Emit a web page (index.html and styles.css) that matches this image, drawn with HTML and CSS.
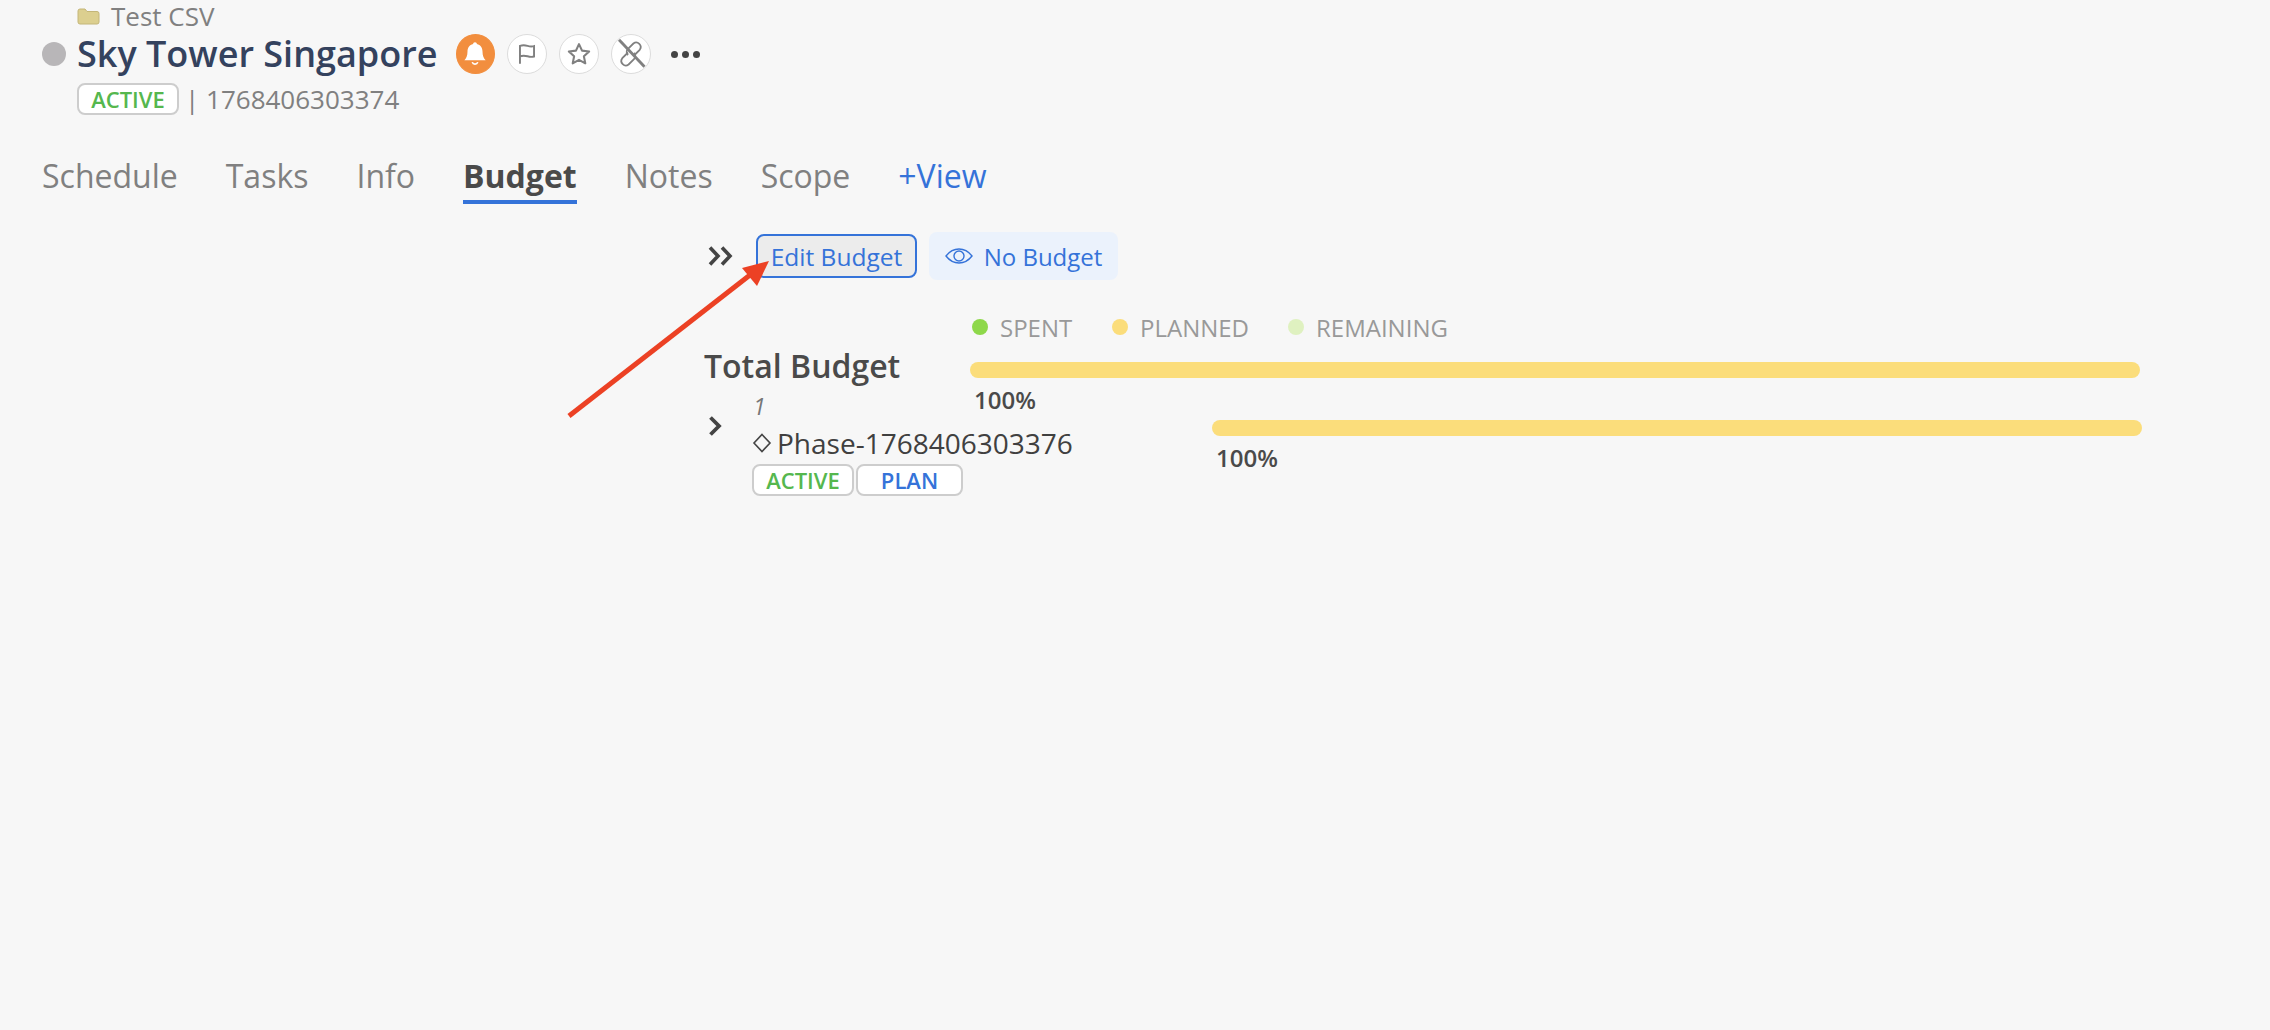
FILE: index.html
```html
<!DOCTYPE html>
<html lang="en">
<head>
<meta charset="utf-8">
<title>Sky Tower Singapore</title>
<link rel="stylesheet" href="styles.css">
</head>
<body>
<div class="page">
  <header class="head">
    <div class="crumb">
      <svg class="folder" viewBox="0 0 23 17"><path d="M1 3a2 2 0 0 1 2-2h5l2 2.500h10a2 2 0 0 1 2 2V14a2 2 0 0 1-2 2H3a2 2 0 0 1-2-2z" fill="#dccf8f" stroke="#c4b678" stroke-width="1"/></svg>
      <span class="crumb-text">Test CSV</span>
    </div>
    <div class="title-row">
      <span class="status-dot"></span>
      <h1 class="title">Sky Tower Singapore</h1>
      <div class="actions">
        <span class="circle circle-on">
          <svg viewBox="0 0 24 24" width="30" height="30"><path d="M12 2.500c.9 0 1.500.6 1.500 1.400 3 .7 4.500 3.100 4.500 6.100 0 3.500 1 5.500 2.500 7H3.500C5 15.500 6 13.500 6 10c0-3 1.500-5.400 4.500-6.100 0-.8.6-1.400 1.500-1.400z" fill="#fff"/><path d="M9.800 18.500a2.300 2.300 0 0 0 4.400 0" fill="none" stroke="#fff" stroke-width="1.300"/></svg>
        </span>
        <span class="circle">
          <svg viewBox="0 0 24 24" width="26" height="26" fill="none" stroke="#808080" stroke-width="1.800"><path d="M5.500 21V4.500c3-1 5-.6 7 0s4 .8 6 .2v9.600c-2 .6-4 .4-6-.2s-4-1-7 0"/></svg>
        </span>
        <span class="circle">
          <svg viewBox="0 0 24 24" width="28" height="28" fill="none" stroke="#808080" stroke-width="1.800" stroke-linejoin="round"><path d="M12 3.500l2.600 5.600 6.100.7-4.500 4.200 1.200 6-5.400-3-5.400 3 1.200-6-4.500-4.200 6.100-.7z"/></svg>
        </span>
        <span class="circle">
          <svg viewBox="0 0 24 24" width="36" height="36" fill="none" stroke="#808080"><path d="M10 11l-3.800 3.800a3 3 0 0 0 4.200 4.200l3.600-3.600a3 3 0 0 0 0-4.200" stroke-width="1.200"/><path d="M14 13l3.800-3.800a3 3 0 0 0-4.200-4.200L10 8.600a3 3 0 0 0 0 4.200" stroke-width="1.200"/><path d="M4 2.500l17 18" stroke-width="1.900"/></svg>
        </span>
        <span class="more"><i></i><i></i><i></i></span>
      </div>
    </div>
    <div class="meta">
      <span class="badge badge-green badge-main">ACTIVE</span>
      <span class="meta-id">| 1768406303374</span>
    </div>
  </header>

  <nav class="tabs">
    <a class="tab">Schedule</a>
    <a class="tab">Tasks</a>
    <a class="tab">Info</a>
    <a class="tab tab-active">Budget</a>
    <a class="tab">Notes</a>
    <a class="tab">Scope</a>
    <a class="tab tab-link">+View</a>
  </nav>

  <section class="budget">
    <div class="toolbar">
      <svg class="dbl" viewBox="0 0 25 20" fill="none" stroke="#444" stroke-width="3.600"><path d="M2 1.500l8 8.500-8 8.500M14 1.500l8 8.500-8 8.500"/></svg>
      <button class="btn btn-edit">Edit Budget</button>
      <button class="btn btn-view">
        <svg viewBox="0 0 28 18" width="28" height="18" fill="none" stroke="#3573d9" stroke-width="1.400"><path d="M1 9c3.500-4.500 8-7 13-7s9.500 2.500 13 7c-3.500 4.500-8 7-13 7S4.500 13.500 1 9z"/><circle cx="14" cy="9" r="5"/></svg>
        No Budget
      </button>
    </div>
    <div class="legend">
      <span class="legend-item"><i class="dot dot-spent"></i>SPENT</span>
      <span class="legend-item"><i class="dot dot-planned"></i>PLANNED</span>
      <span class="legend-item"><i class="dot dot-remaining"></i>REMAINING</span>
    </div>
    <div class="total-row">
      <div class="total-label">Total Budget</div>
      <div class="bar-col">
        <div class="bar"></div>
        <div class="pct">100%</div>
      </div>
    </div>
    <div class="phase-row">
      <svg class="chev" viewBox="0 0 14 20" fill="none" stroke="#444" stroke-width="3.800"><path d="M1.500 1.500l8.500 8.500-8.500 8.500"/></svg>
      <div class="phase-info">
        <div class="phase-num">1</div>
        <div class="phase-name">
          <svg class="diamond" viewBox="0 0 20 20" fill="none" stroke="#444" stroke-width="1.600"><path d="M10 1.500l8 8.500-8 8.500-8-8.500z"/></svg>
          <span>Phase-1768406303376</span>
        </div>
        <div class="phase-badges">
          <span class="badge badge-green badge-a">ACTIVE</span>
          <span class="badge badge-blue badge-p">PLAN</span>
        </div>
      </div>
      <div class="bar-col bar-col-phase">
        <div class="bar"></div>
        <div class="pct">100%</div>
      </div>
    </div>
  </section>
</div>
<svg class="arrow" viewBox="0 0 2270 1030" width="2270" height="1030"><path d="M569 416L750 275" stroke="#ec4124" stroke-width="5" fill="none"/><path d="M769 261L742 268L757 286z" fill="#ec4124"/></svg>
</body>
</html>
```

FILE: styles.css
```css
* { box-sizing: border-box; }
html, body { margin: 0; height: 100%; }
body {
  background: #f7f7f7;
  font-family: "Open Sans", "Noto Sans", sans-serif;
  color: #4a4a4a;
  overflow: hidden;
  position: relative;
}
.page { padding: 0 0 0 42px; }

.crumb { display: flex; align-items: center; height: 32px; padding-left: 35px; font-size: 26px; color: #808080; }
.crumb-text { line-height: 26px; }
.folder { width: 23px; height: 17px; margin-right: 11px; }

.title-row { display: flex; align-items: center; height: 46px; margin-top: -1px; }
.status-dot { width: 24px; height: 24px; border-radius: 50%; background: #b8b6b8; margin-right: 11px; }
.title { margin: 0; font-size: 36px; font-weight: 600; color: #34425e; line-height: 40px; }
.actions { display: flex; align-items: center; gap: 12px; margin-left: 18px; }
.circle { width: 40px; height: 40px; border-radius: 50%; background: #fff; border: 1.500px solid #dcdcdc; display: flex; align-items: center; justify-content: center; flex: none; overflow: hidden; }
.circle-on { width: 39px; background: #f28e3e; border-color: #f28e3e; }
.more { display: flex; gap: 4px; margin-left: 8px; }
.more i { width: 7px; height: 7px; border-radius: 50%; background: #444; }

.meta { display: flex; align-items: center; height: 38px; margin-top: 3px; padding-left: 35px; }
.badge { display: inline-flex; align-items: center; justify-content: center; background: #fff; border: 2px solid #cdcdcd; border-radius: 8px; font-weight: 600; font-size: 22px; }
.badge-green { color: #55b74e; }
.badge-blue { color: #3573d9; }
.badge-main { width: 102px; height: 32px; }
.meta-id { margin-left: 6px; font-size: 26px; color: #808080; }

.tabs { display: flex; gap: 48px; margin-top: 30px; height: 56px; }
.tab { font-size: 32px; line-height: 56px; color: #808080; height: 56px; }
.tab-active { font-weight: 700; color: #4a4a4a; border-bottom: 4px solid #3573d9; }
.tab-link { color: #3573d9; }

.budget { margin-top: 28px; padding-left: 662px; }
.toolbar { display: flex; align-items: center; height: 48px; }
.dbl { width: 25px; height: 20px; margin: 0 -1px 0 4px; }
.btn { font-family: inherit; font-size: 24.500px; color: #3573d9; padding: 0; }
.btn-edit { width: 161px; height: 44px; margin-left: 24px; background: #ececec; border: 2px solid #3573d9; border-radius: 8px; }
.btn-view { display: flex; align-items: center; justify-content: center; gap: 11px; width: 189px; height: 48px; margin-left: 12px; background: #ebf2fc; border: 0; border-radius: 8px; font-size: 24px; }

.legend { display: flex; margin-top: 27px; margin-left: 268px; height: 40px; align-items: center; font-size: 24px; color: #999; }
.legend-item { display: flex; align-items: center; }
.legend-item:nth-child(1) { width: 140px; }
.legend-item:nth-child(2) { width: 176px; }
.dot { width: 16px; height: 16px; border-radius: 50%; margin-right: 12px; }
.dot-spent { background: #8ed84a; }
.dot-planned { background: #fbdd7b; }
.dot-remaining { background: #dff1c0; }

.total-row { display: flex; align-items: flex-start; margin-top: 5px; }
.total-label { width: 266px; font-size: 32px; font-weight: 600; line-height: 28px; }
.bar-col { flex: none; width: 1170px; padding-top: 10px; }
.bar { height: 16px; border-radius: 8px; background: #fbdd7b; }
.pct { margin: 10px 0 0 4px; font-size: 24px; font-weight: 600; line-height: 24px; }

.phase-row { display: flex; align-items: flex-start; margin-top: -2px; position: relative; }
.chev { width: 14px; height: 20px; margin: 6px 0 0 5px; }
.phase-info { width: 460px; margin: -18px 0 0 29px; flex: none; }
.phase-num { font-size: 23px; font-style: italic; color: #777; line-height: 28px; padding-left: 1px; }
.phase-name { display: flex; align-items: center; height: 40px; font-size: 28px; font-weight: 500; color: #404040; gap: 5px; margin-top: 3px; }
.diamond { width: 20px; height: 20px; }
.phase-badges { display: flex; gap: 2px; margin-top: 1px; }
.badge-a { width: 102px; height: 32px; }
.badge-p { width: 107px; height: 32px; }
.bar-col-phase { width: 930px; padding-top: 10px; }

.arrow { position: absolute; left: 0; top: 0; pointer-events: none; }
```
